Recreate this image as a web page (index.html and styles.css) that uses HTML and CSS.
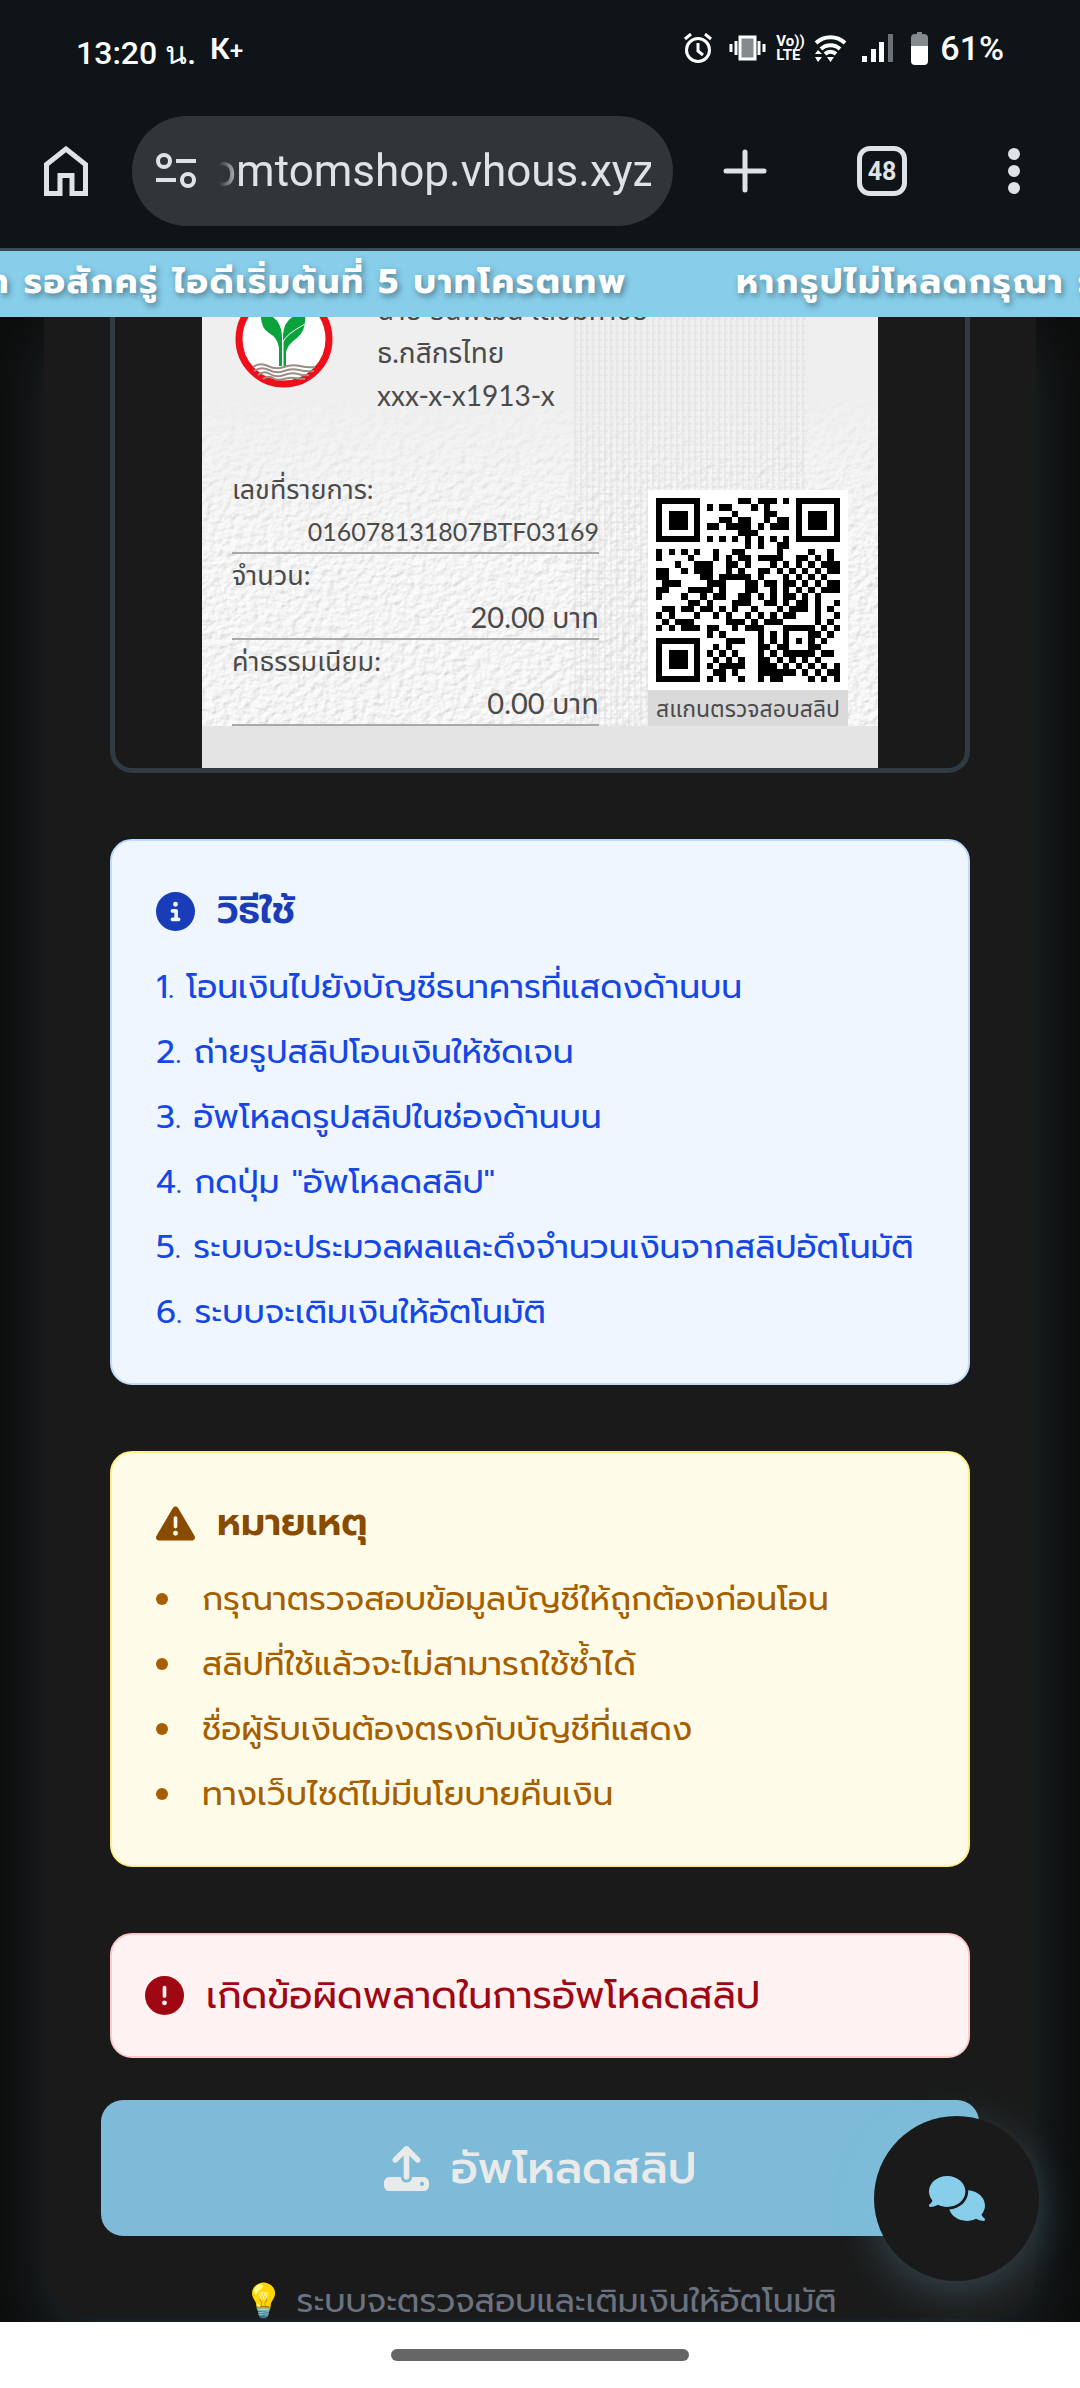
FILE: index.html
```html
<!DOCTYPE html>
<html lang="th">
  <head>
    <meta charset="UTF-8" />
    <meta name="viewport" content="width=device-width, initial-scale=1" />
    <title>เติมเงิน</title>
    <link rel="stylesheet" href="styles.css">
  </head>
  <body>
    <header class="browser">
      <div class="status">
        <span class="clock">13:20 น.</span>
        <span class="kplus">K<small>+</small></span>
        <div class="status-icons">
          <svg width="30" height="30" viewBox="0 0 30 30" fill="none" stroke="#fff" stroke-width="3">
            <circle cx="15" cy="17" r="11.5" />
            <path d="M15 10v8l5 4M2 6l6-5M28 6l-6-5" />
          </svg>
          <svg width="37" height="26" viewBox="0 0 37 26" fill="none" stroke="#fff">
            <rect x="11" y="2" width="15" height="22" fill="#858a8c" stroke-width="3" />
            <path d="M7 6v14M30 6v14M2 9v8M35 9v8" stroke-width="3" />
          </svg>
          <span class="volte"><span>Vo))</span><span>LTE</span></span>
          <svg width="34" height="28" viewBox="0 0 34 28" fill="none" stroke="#fff" stroke-width="4">
            <path d="M3 9a21 21 0 0 1 29 0M8 15a14 14 0 0 1 19 0M12 20a8 8 0 0 1 11 0" />
            <path d="M14 23h7l-3.5 5zM2 20l3-4 4 4zM2 23l3 5 4-5z" fill="#fff" stroke="none" />
          </svg>
          <svg class="signal" width="31" height="28" viewBox="0 0 31 28" fill="#fff">
            <path d="M0 22h5v6H0zM9 15h5v13H9zM17 8h5v20h-5z" />
            <path d="M26 0h5v28h-5z" fill="#6e7274" />
          </svg>
          <svg width="17" height="33" viewBox="0 0 17 33">
            <path d="M6 0h5v2h2q4 0 4 4v9H0V6q0-4 4-4h2z" fill="#858a8c" />
            <path d="M0 14h17v15q0 4-4 4H4q-4 0-4-4z" fill="#fff" />
          </svg>
        </div>
        <span class="battery">61%</span>
      </div>

      <div class="toolbar">
        <button class="tool" type="button" aria-label="หน้าแรก">
          <svg width="44" height="50" viewBox="0 0 44 50" fill="none" stroke="#dfe3e5" stroke-width="5">
            <path d="M2.5 47.5V18.5L22 3l19.5 15.5v29H28V29.5H16v18z" />
          </svg>
        </button>
        <div class="address">
          <svg width="42" height="36" viewBox="0 0 42 36" fill="none" stroke="#dfe3e5" stroke-width="4">
            <circle cx="9" cy="8" r="6" />
            <circle cx="33" cy="27" r="6" />
            <path d="M21 8h20M1 27h20" />
          </svg>
          <input type="text" value="omtomshop.vhous.xyz" aria-label="ที่อยู่เว็บ" />
        </div>
        <div class="actions">
          <button class="tool" type="button" aria-label="แท็บใหม่">
            <svg width="44" height="44" viewBox="0 0 44 44" stroke="#dfe3e5" stroke-width="5" stroke-linecap="round">
              <path d="M22 3v38M3 22h38" />
            </svg>
          </button>
          <button class="tool tabs" type="button">48</button>
          <button class="tool" type="button" aria-label="เมนู">
            <svg width="34" height="46" viewBox="0 0 34 46" fill="#dfe3e5">
              <circle cx="17" cy="6" r="6" />
              <circle cx="17" cy="23" r="6" />
              <circle cx="17" cy="40" r="6" />
            </svg>
          </button>
        </div>
      </div>
    </header>

    <div class="marquee">
      <div class="marquee-track">
        <span>หากรูปไม่โหลดกรุณา รอสักครู่ ไอดีเริ่มต้นที่ 5 บาทโครตเทพ</span>
        <span>หากรูปไม่โหลดกรุณา รอสักครู่ ไอดีเริ่มต้นที่ 5 บาทโครตเทพ</span>
      </div>
    </div>

    <main class="page">
      <div class="panel">
        <div class="preview">
          <div class="slip">
            <svg class="paper" aria-hidden="true">
              <filter id="rough" x="0" y="0" width="100%" height="100%">
                <feTurbulence type="fractalNoise" baseFrequency="0.13 0.16" numOctaves="3" seed="4" />
                <feDiffuseLighting lighting-color="#fff" surfaceScale="1.3" diffuseConstant="1.13">
                  <feDistantLight azimuth="225" elevation="55" />
                </feDiffuseLighting>
              </filter>
              <pattern id="weave" width="6" height="7" patternUnits="userSpaceOnUse">
                <path d="M1 0v7M0 2h4" stroke="#d6d6d6" stroke-width="1" />
              </pattern>
              <linearGradient id="fade" x1="0" y1="0" x2="0" y2="1">
                <stop offset="0.15" stop-color="#efefef" />
                <stop offset="0.5" stop-color="#efefef" stop-opacity="0.3" />
              </linearGradient>
              <rect width="100%" height="100%" filter="url(#rough)" />
              <rect width="100%" height="100%" fill="url(#fade)" />
              <rect x="370" width="236" height="100%" fill="url(#weave)" opacity="0.6" />
            </svg>

            <div class="receiver">
              <svg width="98" height="71" viewBox="0 27 98 71">
                <circle cx="49" cy="49" r="45" fill="#fff" stroke="#ee0f1b" stroke-width="7" />
                <path d="M26 22q20 4 21 24v30h-3V58q-1-10-10-15-9-5-8-21zM70 22q2 18-8 26-9 6-11 14v14h-3V45q1-19 22-23z" fill="#0aa23b" />
                <path d="M48 76V52q2-7 22-18" fill="none" stroke="#fff" stroke-width="1" />
                <path d="M18 77q7-5 15-1t16 1 16-1 15 1M19 81q7-5 15-1t15 1 15-1 15 1M23 85q6-5 12-1t14 1 14-1 11 1M28 89q6-4 10-1t11 1 11-1 10 1" fill="none" stroke="#9c8d84" stroke-width="2" />
              </svg>
              <div class="receiver-text">
                <div>นาย ธนพัฒน์ เดชมหาชัย</div>
                <div>ธ.กสิกรไทย</div>
                <div>xxx-x-x1913-x</div>
              </div>
            </div>

            <div class="details">
              <dl class="amounts">
                <div>
                  <dt>เลขที่รายการ:</dt>
                  <dd>016078131807BTF03169</dd>
                </div>
                <div>
                  <dt>จำนวน:</dt>
                  <dd class="money">20.00 บาท</dd>
                </div>
                <div>
                  <dt>ค่าธรรมเนียม:</dt>
                  <dd class="money">0.00 บาท</dd>
                </div>
              </dl>
              <div class="qr">
                <svg viewBox="0 -0.5 29 29" stroke="#000" shape-rendering="crispEdges">
                  <path d="M0 0h7M13 0h2M16 0h3M20 0h1M22 0h7
                    M0 1h1M6 1h1M8 1h1M10 1h2M15 1h1M17 1h1M22 1h1M28 1h1
                    M0 2h1M2 2h3M6 2h1M12 2h1M17 2h2M22 2h1M24 2h3M28 2h1
                    M0 3h1M2 3h3M6 3h1M10 3h2M13 3h2M17 3h1M19 3h2M22 3h1M24 3h3M28 3h1
                    M0 4h1M2 4h3M6 4h1M8 4h2M11 4h4M16 4h1M18 4h3M22 4h1M24 4h3M28 4h1
                    M0 5h1M6 5h1M13 5h3M22 5h1M28 5h1
                    M0 6h7M8 6h1M10 6h1M12 6h1M14 6h1M16 6h1M18 6h1M20 6h1M22 6h7
                    M14 7h1M16 7h1M19 7h2
                    M0 8h1M2 8h1M4 8h1M6 8h1M9 8h1M12 8h2M19 8h1M24 8h1M27 8h1
                    M0 9h1M5 9h1M9 9h1M11 9h1M13 9h2M16 9h4M22 9h2M25 9h1M27 9h1
                    M3 10h1M6 10h3M11 10h1M12 10h1M14 10h1M18 10h1M20 10h1M22 10h1M24 10h1M26 10h3
                    M0 11h2M4 11h1M6 11h3M11 11h1M13 11h1M16 11h2M19 11h1M21 11h1M23 11h1M25 11h1M27 11h2
                    M0 12h2M7 12h2M10 12h5M16 12h1M20 12h1M22 12h1M24 12h1M26 12h1
                    M1 13h3M8 13h3M14 13h2M17 13h2M20 13h2M23 13h1M25 13h1M27 13h2
                    M0 14h2M5 14h4M10 14h1M14 14h2M18 14h1M20 14h1M22 14h1M24 14h1M26 14h3
                    M0 15h1M4 15h1M7 15h1M9 15h2M13 15h2M16 15h1M18 15h1M20 15h2M23 15h1M25 15h1
                    M5 16h2M8 16h1M12 16h3M17 16h2M20 16h1M22 16h2M25 16h1M28 16h1
                    M1 17h2M4 17h2M7 17h2M10 17h1M12 17h1M15 17h1M19 17h1M21 17h3M25 17h1M27 17h1
                    M0 18h1M2 18h1M6 18h1M9 18h1M11 18h1M14 18h1M16 18h1M18 18h1M20 18h2M25 18h1M28 18h1
                    M1 19h1M3 19h3M11 19h3M15 19h1M17 19h3M25 19h1M27 19h1
                    M0 20h1M2 20h1M4 20h3M8 20h2M12 20h1M14 20h3M20 20h5M26 20h1M28 20h1
                    M8 21h1M10 21h1M16 21h1M18 21h1M20 21h1M24 21h2M27 21h1
                    M0 22h7M11 22h3M16 22h1M18 22h1M20 22h1M22 22h1M24 22h1M26 22h1
                    M0 23h1M6 23h1M9 23h1M11 23h1M16 23h2M19 23h2M24 23h2
                    M0 24h1M2 24h3M6 24h1M8 24h1M10 24h1M12 24h1M16 24h1M18 24h1M20 24h5M26 24h2
                    M0 25h1M2 25h3M6 25h1M9 25h1M11 25h1M13 25h1M16 25h2M19 25h1M21 25h1M23 25h1M25 25h1
                    M0 26h1M2 26h3M6 26h1M8 26h1M10 26h4M16 26h3M20 26h1M22 26h1M24 26h1M26 26h1M28 26h1
                    M0 27h1M6 27h1M9 27h2M12 27h1M16 27h6M23 27h1M25 27h1M27 27h2
                    M0 28h7M8 28h1M10 28h1M13 28h1M16 28h1M18 28h2M24 28h1M26 28h1M28 28h1" />
                </svg>
                <p>สแกนตรวจสอบสลิป</p>
              </div>
            </div>
            <div class="slip-foot"></div>
          </div>
        </div>

        <section class="card card-info">
          <h2>
            <svg class="icon" viewBox="0 0 512 512"><path d="M256 512A256 256 0 1 0 256 0a256 256 0 1 0 0 512zM216 336h24V272H216c-13.3 0-24-10.7-24-24s10.7-24 24-24h48c13.3 0 24 10.7 24 24v88h8c13.3 0 24 10.7 24 24s-10.7 24-24 24H216c-13.3 0-24-10.7-24-24s10.7-24 24-24zm40-208a32 32 0 1 1 0 64 32 32 0 1 1 0-64z" /></svg>
            วิธีใช้
          </h2>
          <ol>
            <li>โอนเงินไปยังบัญชีธนาคารที่แสดงด้านบน</li>
            <li>ถ่ายรูปสลิปโอนเงินให้ชัดเจน</li>
            <li>อัพโหลดรูปสลิปในช่องด้านบน</li>
            <li>กดปุ่ม "อัพโหลดสลิป"</li>
            <li>ระบบจะประมวลผลและดึงจำนวนเงินจากสลิปอัตโนมัติ</li>
            <li>ระบบจะเติมเงินให้อัตโนมัติ</li>
          </ol>
        </section>

        <section class="card card-note">
          <h2>
            <svg class="icon" viewBox="0 0 512 512"><path d="M256 32c14.2 0 27.3 7.5 34.5 19.8l216 368c7.3 12.4 7.3 27.7 .2 40.1S486.3 480 472 480H40c-14.3 0-27.6-7.7-34.7-20.1s-7-27.8 .2-40.1l216-368C228.7 39.5 241.8 32 256 32zm0 128c-13.3 0-24 10.7-24 24V296c0 13.3 10.7 24 24 24s24-10.7 24-24V184c0-13.3-10.7-24-24-24zm32 224a32 32 0 1 0 -64 0 32 32 0 1 0 64 0z" /></svg>
            หมายเหตุ
          </h2>
          <ul>
            <li>กรุณาตรวจสอบข้อมูลบัญชีให้ถูกต้องก่อนโอน</li>
            <li>สลิปที่ใช้แล้วจะไม่สามารถใช้ซ้ำได้</li>
            <li>ชื่อผู้รับเงินต้องตรงกับบัญชีที่แสดง</li>
            <li>ทางเว็บไซต์ไม่มีนโยบายคืนเงิน</li>
          </ul>
        </section>

        <div class="alert" role="alert">
          <svg class="icon" viewBox="0 0 512 512"><path d="M256 512A256 256 0 1 0 256 0a256 256 0 1 0 0 512zm0-384c13.3 0 24 10.7 24 24V264c0 13.3-10.7 24-24 24s-24-10.7-24-24V152c0-13.3 10.7-24 24-24zM224 352a32 32 0 1 1 64 0 32 32 0 1 1 -64 0z" /></svg>
          <span>เกิดข้อผิดพลาดในการอัพโหลดสลิป</span>
        </div>

        <button class="upload" type="submit">
          <svg width="45" height="45" viewBox="0 0 512 512"><path d="M288 109.3V352c0 17.7-14.3 32-32 32s-32-14.3-32-32V109.3l-73.4 73.4c-12.5 12.5-32.8 12.5-45.3 0s-12.5-32.8 0-45.3l128-128c12.5-12.5 32.8-12.5 45.3 0l128 128c12.5 12.5 12.5 32.8 0 45.3s-32.8 12.5-45.3 0L288 109.3zM64 352H192c0 35.3 28.7 64 64 64s64-28.7 64-64H448c35.3 0 64 28.7 64 64v32c0 35.3-28.7 64-64 64H64c-35.3 0-64-28.7-64-64V416c0-35.3 28.7-64 64-64zM432 456a24 24 0 1 0 0-48 24 24 0 1 0 0 48z" /></svg>
          อัพโหลดสลิป
        </button>

        <p class="tip">💡 ระบบจะตรวจสอบและเติมเงินให้อัตโนมัติ</p>
      </div>
    </main>

    <button class="chat" type="button" aria-label="แชท">
      <svg width="56" height="45" viewBox="0 0 640 512"><path d="M208 352c114.9 0 208-78.8 208-176S322.9 0 208 0S0 78.8 0 176c0 38.6 14.7 74.3 39.6 103.4c-3.5 9.4-8.7 17.7-14.2 24.7c-4.8 6.2-9.7 11-13.3 14.3c-1.8 1.6-3.3 2.9-4.3 3.7c-.5 .4-.9 .7-1.1 .8l-.2 .2C1 327.2-1.4 334.4 .8 340.9S9.1 352 16 352c21.8 0 43.8-5.6 62.1-12.5c9.2-3.5 17.8-7.4 25.3-11.4C134.1 343.3 169.8 352 208 352zM448 176c0 112.3-99.1 196.9-216.5 207C255.8 457.4 336.4 512 432 512c38.2 0 73.9-8.7 104.7-23.9c7.5 4 16 7.9 25.2 11.4c18.3 6.9 40.3 12.5 62.1 12.5c6.9 0 13.1-4.5 15.2-11.1c2.1-6.6-.2-13.8-5.8-17.9l-.2-.2c-.2-.2-.6-.4-1.1-.8c-1-.8-2.5-2-4.3-3.7c-3.6-3.3-8.5-8.1-13.3-14.3c-5.5-7-10.7-15.4-14.2-24.7c24.9-29 39.6-64.7 39.6-103.4c0-92.8-84.9-168.9-192.6-175.5c.4 5.1 .6 10.3 .6 15.5z" /></svg>
    </button>

    <footer class="gesture-bar"><span></span></footer>
  </body>
</html>
```
FILE: styles.css
```css
* {
  box-sizing: border-box;
}
body {
  margin: 0;
  background: #0d0d0d;
  font-family: Prompt, Kanit, "Noto Sans", sans-serif;
  overflow-x: hidden;
}
h2,
ol,
ul,
dl,
dd,
p {
  margin: 0;
  padding: 0;
}
button {
  border: none;
  padding: 0;
  font-family: inherit;
  cursor: pointer;
}
svg {
  display: block;
  flex-shrink: 0;
}

/* phone status bar and address bar */
.browser {
  background: #0e1417;
  border-bottom: 3px solid #3a4a52;
  font-family: Roboto, sans-serif;
}
.status {
  display: flex;
  align-items: center;
  height: 116px;
  padding: 0 76px 20px;
  color: #fff;
}
.clock {
  font-size: 32px;
  font-weight: 500;
  padding-top: 8px;
}
.kplus {
  margin-left: 14px;
  font-family: Lato, sans-serif;
  font-size: 28px;
  font-weight: 900;
}
.kplus small {
  font-size: 24px;
}
.status-icons {
  display: flex;
  align-items: center;
  gap: 10px;
  margin-left: auto;
}
.status-icons svg:first-child {
  margin-right: 6px;
}
.status-icons .signal {
  margin: 0 8px 0 5px;
}
.volte {
  display: flex;
  flex-direction: column;
  width: 27px;
  font-size: 15px;
  font-weight: 700;
  line-height: 14px;
}
.battery {
  margin-left: 12px;
  font-size: 34px;
  font-weight: 500;
}
.toolbar {
  display: flex;
  align-items: center;
  gap: 44px;
  padding: 0 49px 22px 44px;
}
.tool {
  background: none;
}
.address {
  display: flex;
  flex: 1;
  align-items: center;
  gap: 14px;
  height: 110px;
  min-width: 0;
  padding: 0 22px 0 23px;
  border-radius: 55px;
  background: #303538;
}
.address input {
  flex: 1;
  min-width: 0;
  padding: 0;
  border: none;
  background: none;
  color: #dfe3e5;
  font-family: Roboto, sans-serif;
  font-size: 44px;
  text-align: right;
  outline: none;
  -webkit-mask-image: linear-gradient(to right, transparent 8px, #000 30px);
  mask-image: linear-gradient(to right, transparent 8px, #000 30px);
}
.actions {
  display: flex;
  align-items: center;
  gap: 90px;
  margin-left: 6px;
}
.tabs {
  width: 50px;
  height: 50px;
  border: 5px solid #dfe3e5;
  border-radius: 13px;
  color: #dfe3e5;
  font-size: 25px;
  font-weight: 700;
}

.marquee {
  height: 66px;
  overflow: hidden;
  background: #87ceeb;
}
.marquee-track {
  display: flex;
  gap: 109px;
  margin-left: -318px;
  color: #fff;
  font-size: 34px;
  font-weight: 700;
  letter-spacing: 2px;
  line-height: 62px;
  white-space: nowrap;
  text-shadow: 2px 3px 6px rgba(0, 0, 0, 0.4);
}

.page {
  padding: 0 44px 4px;
  overflow: hidden;
}
.panel {
  padding: 0 66px;
  border-radius: 0 0 44px 44px;
  background: #1a1a1a;
  box-shadow: 0 22px 64px rgba(135, 206, 235, 0.14);
}

/* slip preview */
.preview {
  border: 5px solid #2f3b40;
  border-top: none;
  border-radius: 0 0 22px 22px;
}
.slip {
  position: relative;
  max-width: 676px;
  margin: 0 auto;
  overflow: hidden;
  background: #efefef;
  color: #4a4a4a;
  font-family: Lato, "Noto Sans Thai", "Noto Sans", serif;
  font-size: 27px;
}
.paper {
  position: absolute;
  width: 100%;
  height: 100%;
}
.receiver {
  position: relative;
  display: flex;
  gap: 44px;
  height: 151px;
  padding-left: 33px;
}
.receiver-text {
  margin-top: -29px;
  font-size: 28px;
  line-height: 43px;
}
.details {
  position: relative;
  display: flex;
  align-items: flex-end;
  gap: 49px;
  padding: 0 30px;
}
.amounts {
  flex: 1;
  line-height: 42px;
}
.amounts > div {
  border-bottom: 2px solid #a9a9a9;
}
.amounts dd {
  font-size: 25px;
  text-align: right;
}
.amounts .money {
  font-size: 29px;
}
.qr {
  width: 200px;
  background: #fff;
}
.qr svg {
  width: 184px;
  height: 184px;
  margin: 8px;
}
.qr p {
  background: #dadada;
  font-size: 23px;
  line-height: 36px;
  text-align: center;
  white-space: nowrap;
}
.slip-foot {
  position: relative;
  height: 42px;
  background: #e4e4e4;
}

/* info boxes */
.card {
  margin-top: 66px;
  padding: 44px;
  border: 2px solid;
  border-radius: 22px;
  font-size: 33px;
  line-height: 54px;
}
.card h2 {
  display: flex;
  align-items: center;
  gap: 22px;
  margin-bottom: 23px;
  font-size: 38px;
  font-weight: 600;
  line-height: 52px;
}
.icon {
  width: 39px;
  height: 39px;
}
.icon,
.upload svg,
.chat svg {
  fill: currentColor;
}
.card li + li {
  margin-top: 11px;
}
.card ol {
  list-style-position: inside;
}
.card ul {
  list-style: none;
}
.card ul li {
  display: flex;
  align-items: center;
  gap: 34px;
}
.card ul li::before {
  content: "";
  width: 12px;
  height: 12px;
  border-radius: 50%;
  background: currentColor;
}
.card-info {
  border-color: #bedbff;
  background: #eff6ff;
  color: #1447e6;
}
.card-info h2 {
  color: #193cb8;
}
.card-note {
  border-color: #fff085;
  background: #fefce8;
  color: #a65f00;
}
.card-note h2 {
  color: #894b00;
}
.alert {
  display: flex;
  align-items: center;
  gap: 22px;
  margin-top: 66px;
  padding: 33px;
  border: 2px solid #ffc9c9;
  border-radius: 22px;
  background: #fef2f2;
  color: #9f0712;
  font-size: 38px;
  line-height: 55px;
}

.upload {
  display: flex;
  align-items: center;
  justify-content: center;
  gap: 22px;
  width: calc(100% + 18px);
  height: 136px;
  margin: 42px -9px 0;
  border-radius: 22px;
  background: #7dbbd8;
  color: #e9eaea;
  font-size: 44px;
  font-weight: 500;
}
.tip {
  padding-top: 48px;
  color: #6a7282;
  font-size: 33px;
  line-height: 34px;
  text-align: center;
}
.chat {
  position: fixed;
  right: 41px;
  bottom: 107px;
  display: flex;
  align-items: center;
  justify-content: center;
  width: 165px;
  height: 165px;
  border-radius: 50%;
  background: #1a1a1a;
  color: #87ceeb;
  box-shadow: 0 11px 44px rgba(135, 206, 235, 0.25);
}
.gesture-bar {
  display: flex;
  align-items: center;
  justify-content: center;
  height: 66px;
  background: #fff;
}
.gesture-bar span {
  width: 298px;
  height: 12px;
  border-radius: 6px;
  background: #666;
}
```
